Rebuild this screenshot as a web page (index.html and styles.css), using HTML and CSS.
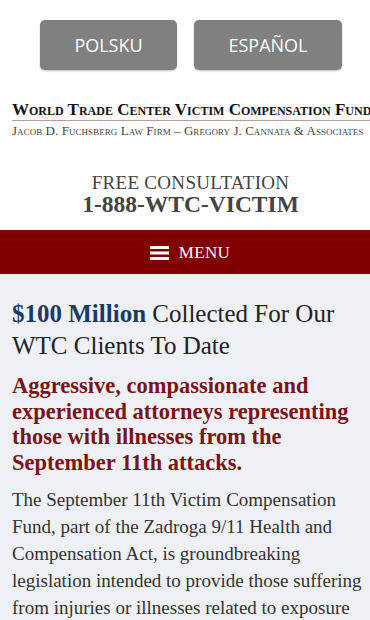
FILE: index.html
```html
<!DOCTYPE html>
<html lang="en">
<head>
<meta charset="utf-8">
<title>World Trade Center Victim Compensation Fund</title>
<link rel="stylesheet" href="styles.css">
</head>
<body>
<header class="top">
  <div class="langs">
    <a class="lang lang-pl" href="#">POLSKU</a>
    <a class="lang lang-es" href="#">ESPAÑOL</a>
  </div>
  <div class="logo">
    <div class="logo-title">World Trade Center Victim Compensation Fund</div>
    <div class="logo-rule"></div>
    <div class="logo-sub">Jacob D. Fuchsberg Law Firm – Gregory J. Cannata &amp; Associates</div>
  </div>
  <div class="phone">
    <div class="phone-label">FREE CONSULTATION</div>
    <div class="phone-num">1-888-WTC-VICTIM</div>
  </div>
</header>
<nav class="menu">
  <svg class="burger" width="19" height="14" viewBox="0 0 19 14"><rect x="0" y="0" width="19" height="3" fill="#fff"/><rect x="0" y="5.5" width="19" height="3" fill="#fff"/><rect x="0" y="11" width="19" height="3" fill="#fff"/></svg>
  <span class="menu-label">MENU</span>
</nav>
<main class="content">
  <h1 class="headline"><strong>$100 Million</strong> Collected For Our WTC Clients To Date</h1>
  <h2 class="sub">Aggressive, compassionate and experienced attorneys representing those with illnesses from the September 11th attacks.</h2>
  <p class="body">The September 11th Victim Compensation Fund, part of the Zadroga 9/11 Health and Compensation Act, is groundbreaking legislation intended to provide those suffering from injuries or illnesses related to exposure to toxins at Ground Zero.</p>
</main>
</body>
</html>
```
FILE: styles.css
```css
* { box-sizing: border-box; }
html, body { margin: 0; padding: 0; }
body {
  background: #eef0f3;
  font-family: "Liberation Serif", "DejaVu Serif", serif;
  width: 370px;
  overflow: hidden;
}
.top {
  background: #fff;
  padding-top: 20px;
  height: 230px;
}
.langs {
  display: flex;
  padding-left: 40px;
  gap: 17px;
}
.lang {
  display: flex;
  align-items: center;
  justify-content: center;
  height: 50px;
  background: #808080;
  color: #fff;
  border-radius: 5px;
  text-decoration: none;
  font-family: "Open Sans", "Liberation Sans", sans-serif;
  font-size: 18px;
  box-shadow: 0 1px 2px rgba(0,0,0,0.25);
}
.lang-pl { width: 137px; }
.lang-es { width: 148px; }
.logo {
  padding-left: 12px;
  margin-top: 30px;
  white-space: nowrap;
  overflow: hidden;
}
.logo-title {
  font-variant: small-caps;
  font-weight: bold;
  font-size: 17px;
  line-height: 19px;
  letter-spacing: 0;
  color: #111;
}
.logo-rule {
  height: 1px;
  background: #c09a9a;
  margin-top: 1px;
  width: 358px;
}
.logo-sub {
  font-variant: small-caps;
  font-size: 13px;
  line-height: 15px;
  color: #444;
  margin-top: 2px;
  letter-spacing: 0.05px;
}
.phone {
  text-align: center;
  margin-top: 35px;
  padding-left: 11px;
  color: #444;
}
.phone-label {
  font-size: 19px;
  line-height: 20px;
  letter-spacing: 0.3px;
}
.phone-num {
  font-size: 23.5px;
  line-height: 24px;
  font-weight: bold;
  margin-top: -1px;
}
.menu {
  height: 46px;
  background: #800000;
  border-bottom: 2px solid #f3e9e9;
  display: flex;
  align-items: center;
  justify-content: center;
  gap: 10px;
  padding-left: 10px;
  padding-top: 2px;
}
.menu-label {
  color: #fff;
  font-size: 17px;
  letter-spacing: 0.3px;
}
.content {
  padding: 22px 4px 0 12px;
}
.headline {
  margin: 0;
  font-weight: normal;
  font-size: 25px;
  line-height: 32px;
  color: #222;
}
.headline strong {
  color: #1b3a6b;
}
.sub {
  margin: 11px 0 0 0;
  font-size: 22.5px;
  line-height: 25.5px;
  font-weight: bold;
  color: #7b1416;
}
.body {
  margin: 11px 0 0 0;
  font-size: 19px;
  line-height: 27px;
  color: #333;
}
```
